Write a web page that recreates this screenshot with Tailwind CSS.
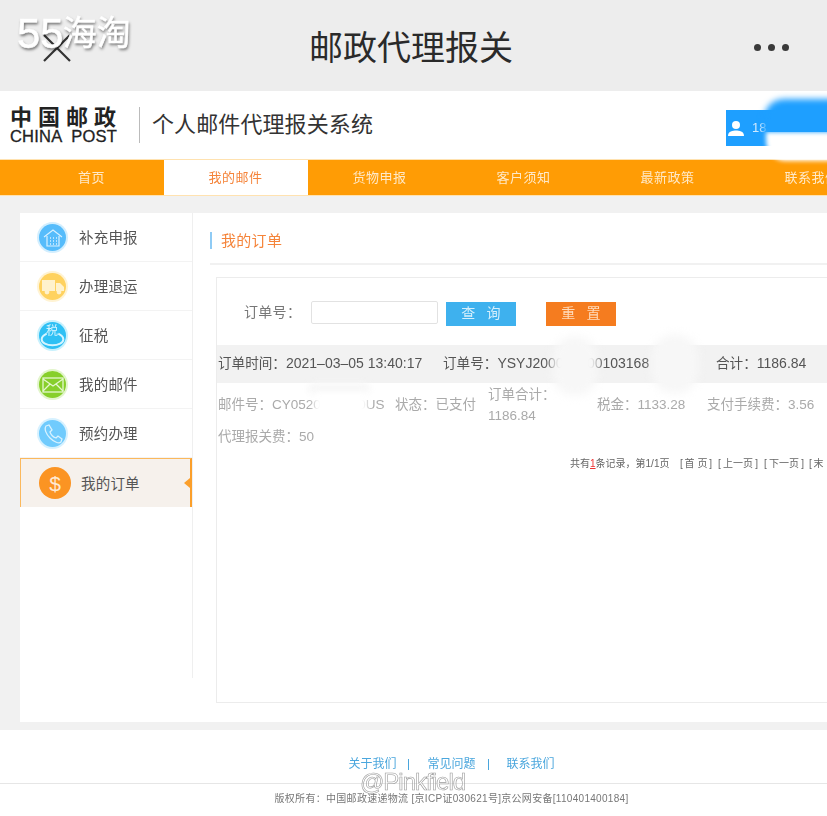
<!DOCTYPE html>
<html lang="zh">
<head>
<meta charset="utf-8">
<script src="https://cdn.jsdelivr.net/npm/@tailwindcss/browser@4"></script>
</head>
<body class="m-0">
<div class="relative w-[827px] h-[816px] overflow-hidden bg-white font-['Liberation_Sans','Noto_Sans_CJK_SC',sans-serif]">
  <div class="w-[903px] blur-[0.35px]">
    <!-- app bar -->
    <div class="w-[827px] h-[91px] bg-[#ededed] flex items-center justify-between pl-[42px] pr-[38px]">
      <svg width="30" height="28" viewBox="0 0 30 28" class="mt-[5px]"><path d="M2 1 L28 27 M28 1 L2 27" stroke="#333" stroke-width="2.2" fill="none"/></svg>
      <div class="text-[34px] leading-none text-[#2a2a2a] mr-[4px] mt-[4px]">邮政代理报关</div>
      <div class="flex gap-[7px] mt-[4px]">
        <span class="w-[7px] h-[7px] rounded-full bg-[#3a3a3a]"></span>
        <span class="w-[7px] h-[7px] rounded-full bg-[#3a3a3a]"></span>
        <span class="w-[7px] h-[7px] rounded-full bg-[#3a3a3a]"></span>
      </div>
    </div>
    <!-- header -->
    <div class="h-[68px] bg-white flex items-center pl-[10px]">
      <div class="flex flex-col w-[108px] text-[#222]">
        <div class="text-[22px] leading-[22px] font-bold tracking-[6px] whitespace-nowrap">中国邮政</div>
        <div class="text-[16.5px] leading-[15px] font-medium tracking-[0.2px] [word-spacing:5px] whitespace-nowrap [-webkit-text-stroke:0.3px_#222]">CHINA POST</div>
      </div>
      <div class="w-[1px] h-[36px] bg-[#bbb] ml-[21px]"></div>
      <div class="ml-[12px] text-[22px] leading-none text-[#333] whitespace-nowrap tracking-[0.1px]">个人邮件代理报关系统</div>
      <div class="w-[101px] h-[36px] bg-[#1e9fff] ml-[353px] mt-[6px] flex items-center pl-[2px] shrink-0">
        <svg width="16" height="16" viewBox="0 0 16 16"><circle cx="8" cy="5" r="4" fill="#fff"/><path d="M0 16 C0 11 5 10.5 8 10.5 C11 10.5 16 11 16 16 Z" fill="#fff"/></svg>
        <span class="ml-[8px] text-[13px] text-[#cfe9ff]">18</span>
      </div>
    </div>
    <!-- nav -->
    <div class="h-[37px] bg-[#ff9c05] border-t border-b border-[#ffe2b0] pl-[19.5px] flex text-[13px] text-[#ffe9c8]">
      <div class="w-[144px] flex items-center justify-center tracking-[0.5px]">首页</div>
      <div class="w-[144px] flex items-center justify-center tracking-[0.5px] bg-white text-[#f5843a]">我的邮件</div>
      <div class="w-[144px] flex items-center justify-center tracking-[0.5px]">货物申报</div>
      <div class="w-[144px] flex items-center justify-center tracking-[0.5px]">客户须知</div>
      <div class="w-[144px] flex items-center justify-center tracking-[0.5px]">最新政策</div>
      <div class="w-[144px] flex items-center justify-center tracking-[0.5px]">联系我们</div>
    </div>
    <!-- body -->
    <div class="h-[534px] bg-[#f1f1f1] pt-[17px] pb-[8px] pl-[20px]">
      <div class="h-full bg-white flex">
        <!-- sidebar -->
        <div class="w-[173px] h-[465px] border-r border-[#efefef] shrink-0 text-[14.5px] text-[#555] tracking-[0.2px]">
          <div class="h-[49px] border-b border-[#f3f3f3] flex items-center pl-[19px] pt-[1px] gap-[13px]">
            <span class="w-[27px] h-[27px] rounded-full bg-[#56bcfb] ring-2 ring-[#d2eefe] flex items-center justify-center">
              <svg width="20" height="20" viewBox="0 0 20 20" fill="none" stroke="#d7f0ff" stroke-width="1.2"><path d="M1 9 L10 2 L19 9 M4 8 V18 H16 V8"/><path d="M7 10 h1 M10 10 h1 M13 10 h1 M7 13 h1 M10 13 h1 M13 13 h1 M7 16 h1 M10 16 h1 M13 16 h1" stroke-width="1.6"/></svg>
            </span>
            <span class="mt-[2px]">补充申报</span>
          </div>
          <div class="h-[49px] border-b border-[#f3f3f3] flex items-center pl-[19px] pt-[1px] gap-[13px]">
            <span class="w-[27px] h-[27px] rounded-full bg-[#ffd25f] ring-2 ring-[#fff3d3] flex items-center justify-center">
              <svg width="22" height="16" viewBox="0 0 22 16" fill="#fff2cd"><rect x="0" y="1" width="13" height="11"/><path d="M14 4 H18 L22 8 V12 H14 Z"/><circle cx="5" cy="13" r="2.4"/><circle cx="17" cy="13" r="2.4"/></svg>
            </span>
            <span class="mt-[2px]">办理退运</span>
          </div>
          <div class="h-[49px] border-b border-[#f3f3f3] flex items-center pl-[19px] pt-[1px] gap-[13px]">
            <span class="relative w-[27px] h-[27px] rounded-full bg-[#2fc0f4] ring-2 ring-[#c8f1fd] flex items-center justify-center">
              <svg width="25" height="15" viewBox="0 0 28 18" fill="none" stroke="#d5f4ff" stroke-width="2.4" class="mt-[7px]"><path d="M7 2 C3 4 1 6 1 9 C1 13 7 16 14 16 C21 16 27 13 27 9 C27 6 25 4 21 2"/></svg>
              <span class="absolute left-[7px] top-[2px] text-[12px] leading-[14px] tracking-normal text-[#d5f4ff]">税</span>
            </span>
            <span class="mt-[2px]">征税</span>
          </div>
          <div class="h-[49px] border-b border-[#f3f3f3] flex items-center pl-[19px] pt-[1px] gap-[13px]">
            <span class="w-[27px] h-[27px] rounded-full bg-[#87cf2b] ring-2 ring-[#e2f5cb] flex items-center justify-center">
              <svg width="22" height="16" viewBox="0 0 22 16" fill="none" stroke="#e5f7cf" stroke-width="1.3"><rect x="1" y="1" width="20" height="14"/><path d="M1 2 L11 9 L21 2 M1 14 L8 7 M21 14 L14 7"/></svg>
            </span>
            <span class="mt-[2px]">我的邮件</span>
          </div>
          <div class="h-[49px] border-b border-[#f3f3f3] flex items-center pl-[19px] pt-[1px] gap-[13px]">
            <span class="w-[27px] h-[27px] rounded-full bg-[#70cbfd] ring-2 ring-[#d6f1ff] flex items-center justify-center">
              <svg width="20" height="20" viewBox="0 0 20 20" fill="none" stroke="#d8f2ff" stroke-width="1.3"><path d="M3 2 L6 1 L9 6 L7 8 C8 11 10 13 13 14 L15 12 L19 15 L18 18 C16 20 11 18 7 14 C3 10 1 5 3 2 Z"/></svg>
            </span>
            <span class="mt-[2px]">预约办理</span>
          </div>
          <div class="relative h-[49px] bg-[#f6f1ec] border-t border-l border-[#fbb85c] border-r-[2px] border-r-[#fb9f2b] flex items-center pl-[18px] gap-[10px]">
            <span class="w-[32px] h-[32px] rounded-full bg-[#fb9423] flex items-center justify-center text-[21px] leading-none text-[#ffe9d2] tracking-normal">$</span>
            <span class="mt-[3px]">我的订单</span>
            <span class="absolute right-0 top-[19px] border-y-[5px] border-y-transparent border-r-[6px] border-r-[#fb9f2b]"></span>
          </div>
        </div>
        <!-- main -->
        <div class="flex-1 pl-[23px]">
          <div class="h-[52px] border-b-2 border-[#f1f1f1] flex items-center -ml-[6px]">
            <span class="w-[2px] h-[17px] bg-[#8fcbf5] mt-[5px]"></span>
            <span class="ml-[9px] mt-[7px] text-[15px] text-[#f5843a] tracking-[0.3px]">我的订单</span>
          </div>
          <div class="mt-[12px] h-[426px] border border-[#ececec] text-[#aaa]">
            <!-- search -->
            <div class="h-[67px] flex items-center pl-[27px] pt-[4px] text-[14px] text-[#777] tracking-[0.3px]">
              <span class="w-[67px] -mt-[2px]">订单号：</span>
              <span class="w-[127px] h-[23px] rounded-[2px] border border-[#e2e2e2] bg-white -mt-[3px]"></span>
              <span class="ml-[8px] w-[70px] h-[24px] bg-[#3eb1ee] flex items-center justify-center gap-[11px] text-[#d5effc] text-[14px]"><span>查</span><span>询</span></span>
              <span class="ml-[30px] w-[70px] h-[24px] bg-[#f57c1f] flex items-center justify-center gap-[11px] text-[#ffdcbc] text-[14px]"><span>重</span><span>置</span></span>
            </div>
            <!-- order row -->
            <div class="h-[38px] bg-[#f2f2f2] flex items-center pl-[1px] text-[13.6px] text-[#555] whitespace-nowrap">
              <span class="w-[225px]">订单时间：<span class="text-[14px]">2021–03–05 13:40:17</span></span>
              <span class="w-[273px]">订单号：<span class="text-[14px]">YSYJ200000000103168</span></span>
              <span>合计：<span class="text-[14px]">1186.84</span></span>
            </div>
            <!-- detail row -->
            <div class="flex items-center pl-[1px] h-[42px] mt-[1px] text-[13.5px] whitespace-nowrap">
              <span class="w-[177px]">邮件号：CY0520000000US</span>
              <span class="w-[93px]">状态：已支付</span>
              <span class="w-[109px] leading-[21px]">订单合计：<br>1186.84</span>
              <span class="w-[110px]">税金：1133.28</span>
              <span>支付手续费：3.56</span>
            </div>
            <div class="pl-[1px] h-[22px] text-[13.5px] leading-[22px]">代理报关费：50</div>
            <!-- pagination -->
            <div class="pl-[353px] mt-[9px] text-[10px] leading-[14px] text-[#666] whitespace-nowrap flex">
              <span class="w-[110px]">共有<span class="text-[#e33] underline">1</span>条记录，第1/1页</span>
              <span class="w-[32px] flex justify-between"><span>[</span><span>首 页</span><span>]</span></span>
              <span class="w-[40px] ml-[6px] flex justify-between"><span>[</span><span>上一页</span><span>]</span></span>
              <span class="w-[40px] ml-[6px] flex justify-between"><span>[</span><span>下一页</span><span>]</span></span>
              <span class="w-[32px] ml-[5px] flex justify-between"><span>[</span><span>末 页</span><span>]</span></span>
            </div>
          </div>
        </div>
      </div>
    </div>
    <!-- footer -->
    <div class="h-[86px] bg-white">
      <div class="h-[54px] border-b border-[#e6e6e6] flex items-center justify-center pt-[15px] gap-[12px] text-[12px] text-[#4aa6dd]">
        <span>关于我们</span><span class="w-[1px] h-[11px] bg-[#4aa6dd]"></span>
        <span class="ml-[6px]">常见问题</span><span class="w-[1px] h-[11px] bg-[#4aa6dd]"></span>
        <span class="ml-[6px]">联系我们</span>
      </div>
      <div class="text-center text-[10px] leading-[14px] mt-[8px] text-[#777] tracking-[0.3px]">版权所有：中国邮政速递物流 [京ICP证030621号]京公网安备[110401400184]</div>
    </div>
  </div>

  <!-- smudges over sensitive text -->
  <div class="absolute left-[766px] top-[132px] w-[90px] h-[29px] rounded-b-[20px] bg-white blur-[2px]"></div>
  <div class="absolute left-[755px] top-[90px] w-[72px] h-[42px] overflow-hidden">
    <div class="ml-[9px] mt-[9px] w-[90px] h-[60px] rounded-[20px] bg-[#1e9fff] blur-[3px]"></div>
  </div>
  <div class="absolute left-[308px] top-[383px] w-[62px] h-[12px] rounded-full bg-[#f7f7f7] blur-[3px]"></div>
  <div class="absolute left-[314px] top-[392px] w-[54px] h-[26px] bg-white blur-[3px]"></div>
  <div class="absolute left-[552px] top-[336px] w-[46px] h-[60px] rounded-full bg-[#f7f7f7] blur-[4px]"></div>
  <div class="absolute left-[651px] top-[334px] w-[48px] h-[60px] rounded-full bg-[#f7f7f7] blur-[4px]"></div>

  <!-- watermarks -->
  <div class="absolute left-[17px] top-[10px] flex items-center h-[48px] text-white [-webkit-text-stroke:0.5px_#fff] [text-shadow:1px_2px_3px_rgba(0,0,0,0.55)] whitespace-nowrap">
    <span class="text-[42px] leading-none">55</span><span class="text-[34px] leading-none -ml-[1px] -mt-[3px]">海淘</span>
  </div>
  <div class="absolute left-[360px] top-[768px] text-[24px] leading-[28px] text-white/30 [-webkit-text-stroke:0.6px_#9a9a9a] tracking-[-1px] whitespace-nowrap">@Pinkfield</div>
</div>
</body>
</html>
